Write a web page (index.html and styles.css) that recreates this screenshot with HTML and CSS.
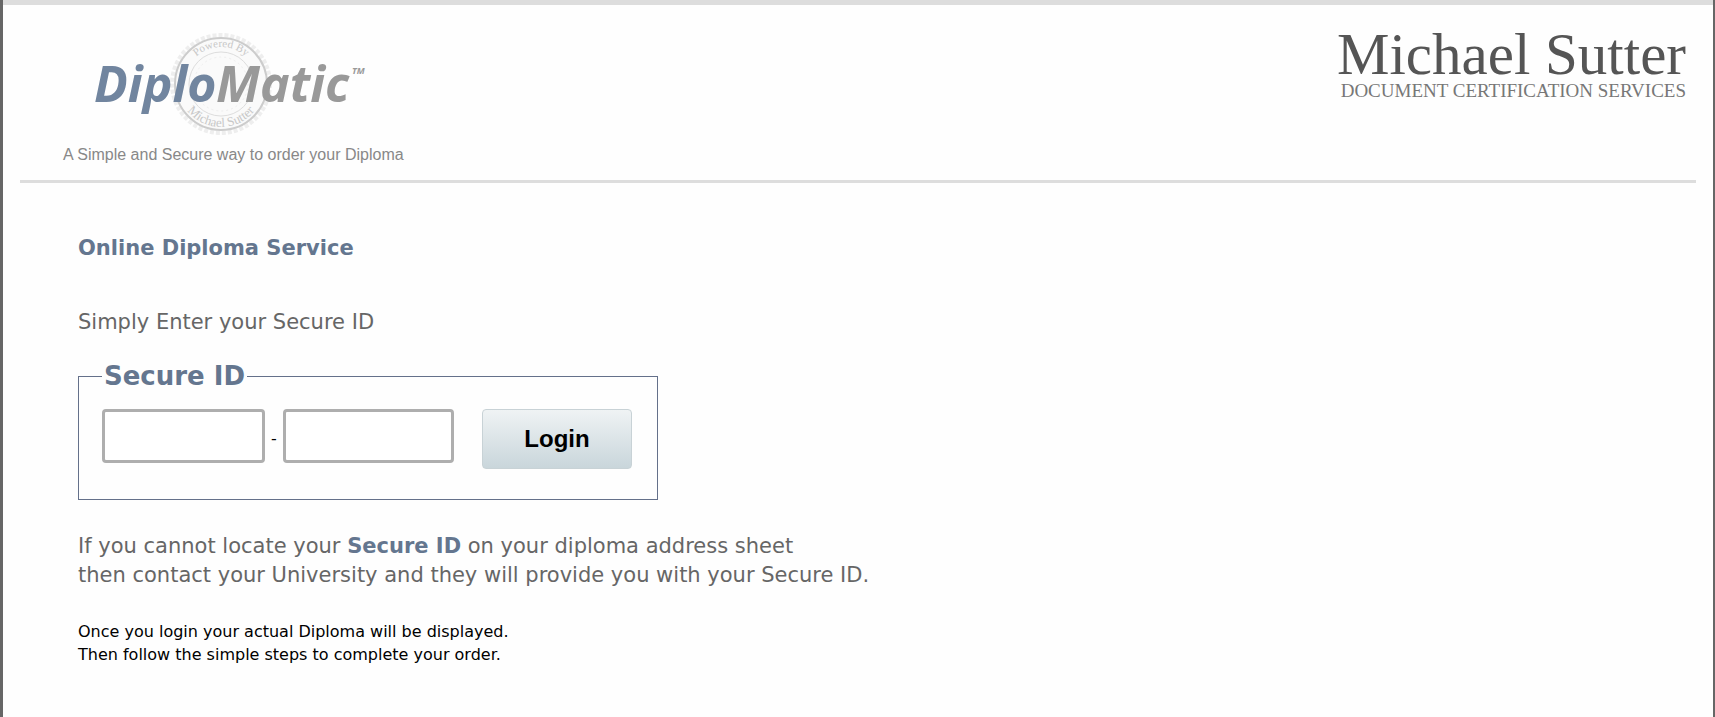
FILE: index.html
```html
<!doctype html>
<html lang="en">
<head>
  <meta charset="utf-8">
  <title>Online Diploma Service</title>
  <link rel="stylesheet" href="styles.css">
</head>
<body>
<div class="page">
  <header class="header">
    <div class="brand">
      <svg class="logo" width="290" height="108" viewBox="80 30 290 108" role="img" aria-label="DiploMatic">
        <defs>
          <path id="sealTop" d="M184 84 A37 37 0 0 1 258 84"/>
          <path id="sealBottom" d="M178 84 A43 43 0 0 0 264 84"/>
        </defs>
        <circle class="seal-edge" cx="221" cy="84" r="49"/>
        <circle class="seal-ring" cx="221" cy="84" r="46"/>
        <circle class="seal-inner" cx="221" cy="84" r="32"/>
        <circle class="seal-dots" cx="221" cy="84" r="27"/>
        <text class="seal-text"><textPath href="#sealTop" startOffset="50%">Powered By</textPath></text>
        <text class="seal-text seal-name"><textPath href="#sealBottom" startOffset="50%">Michael Sutter</textPath></text>
        <text class="word diplo" x="94" y="102">Diplo</text>
        <text class="word matic" x="216" y="102">Matic</text>
        <text class="tm" x="352" y="74">TM</text>
      </svg>
      <p class="tagline">A Simple and Secure way to order your Diploma</p>
    </div>
    <div class="company">
      <div class="company-name">Michael Sutter</div>
      <div class="company-sub">DOCUMENT CERTIFICATION SERVICES</div>
    </div>
  </header>

  <main class="content">
    <h1>Online Diploma Service</h1>
    <p class="intro">Simply Enter your Secure ID</p>
    <form action="#">
      <fieldset class="secure">
        <legend>Secure ID</legend>
        <div class="fields">
          <input class="id-first" type="text" name="id1" aria-label="Secure ID, first part">
          <span class="dash">-</span>
          <input class="id-second" type="text" name="id2" aria-label="Secure ID, second part">
          <button class="login" type="submit">Login</button>
        </div>
      </fieldset>
    </form>
    <p class="help">If you cannot locate your <strong>Secure ID</strong> on your diploma address sheet<br>
    then contact your University and they will provide you with your Secure ID.</p>
    <p class="note">Once you login your actual Diploma will be displayed.<br>
    Then follow the simple steps to complete your order.</p>
  </main>
</div>
</body>
</html>
```
FILE: styles.css
```css
* {
  box-sizing: border-box;
}

body {
  margin: 0;
  font-family: Verdana, "DejaVu Sans", sans-serif;
  color: #000;
  background: #fefefe;
  border-left: 3px solid #666;
  border-right: 2px solid #666;
}

.page {
  min-height: 100vh;
  border-top: 5px solid #ddd;
  padding: 0 17px;
}

.header {
  display: flex;
  justify-content: space-between;
  align-items: flex-start;
  padding: 25px 10px 15px 43px;
  border-bottom: 3px solid #ddd;
}

.logo {
  display: block;
  margin-left: 17px;
}

.word {
  font: italic bold 50px "Open Sans", sans-serif;
}

.diplo {
  fill: #71859f;
}

.matic, .tm {
  fill: #999;
}

.tm {
  font: italic bold 9px "Open Sans", sans-serif;
}

.seal-edge, .seal-ring, .seal-inner, .seal-dots {
  fill: none;
}

.seal-edge {
  stroke: #eee;
  stroke-width: 4;
  stroke-dasharray: 4 2;
}

.seal-ring {
  stroke: #ccc;
  stroke-width: 2;
  fill: #fafafa;
}

.seal-inner {
  stroke: #ddd;
}

.seal-dots {
  stroke: #eee;
  stroke-dasharray: 2 3;
}

.seal-text {
  font: 11px "Liberation Serif", serif;
  fill: #c8c8c8;
  text-anchor: middle;
}

.seal-name {
  font-size: 13px;
}

.tagline {
  margin: 7px 0 0;
  font: 16px/20px "Liberation Sans", Arial, sans-serif;
  color: #888;
}

.company {
  font-family: "Liberation Serif", "Times New Roman", serif;
  text-align: right;
}

.company-name {
  font-size: 59px;
  line-height: 48px;
  color: #555;
}

.company-sub {
  font-size: 19px;
  line-height: 26px;
  color: #777;
}

.content {
  padding: 50px 58px 0;
}

h1 {
  margin: 0 0 44px;
  font-size: 21px;
  line-height: 30px;
  color: #64768f;
}

.intro {
  margin: 0 0 22px;
  font-size: 21px;
  line-height: 30px;
  color: #666;
}

.secure {
  max-width: 580px;
  margin: 0;
  padding: 16px 23px 30px;
  border: 1px solid #64708a;
}

legend {
  padding: 0 2px;
  font-size: 26px;
  font-weight: bold;
  line-height: 34px;
  color: #64768f;
}

.fields {
  display: flex;
  align-items: flex-start;
}

.fields input {
  height: 54px;
  padding: 0 10px;
  border: 3px solid #aeaeae;
  border-radius: 4px;
  background: #fff;
  font-size: 24px;
}

.id-first {
  width: 163px;
}

.id-second {
  width: 171px;
}

.dash {
  width: 18px;
  font-size: 16px;
  line-height: 60px;
  text-align: center;
}

.login {
  width: 150px;
  height: 60px;
  margin-left: 28px;
  border: 1px solid #c8d2d6;
  border-radius: 4px;
  background: linear-gradient(#eff3f4, #c9d6db);
  font: bold 24px "Liberation Sans", Arial, sans-serif;
  color: #000;
}

.help {
  margin: 32px 0 30px;
  font-size: 21px;
  line-height: 29px;
  color: #666;
}

.help strong {
  color: #64768f;
}

.note {
  margin: 0;
  font-size: 16px;
  line-height: 23px;
}
```
